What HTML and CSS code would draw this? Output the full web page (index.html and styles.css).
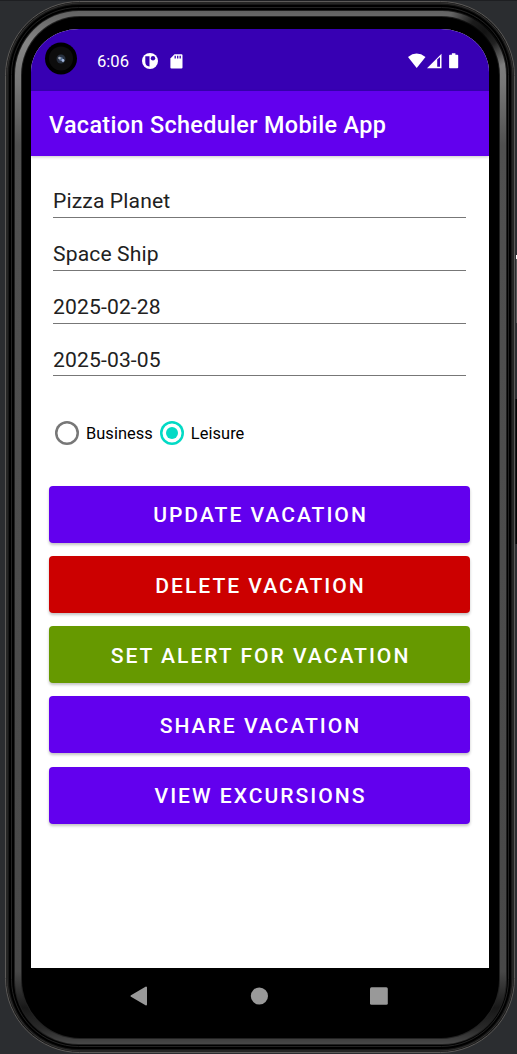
FILE: index.html
```html
<!DOCTYPE html>
<html lang="en">
<head>
<meta charset="utf-8">
<title>Vacation Scheduler Mobile App</title>
<link rel="stylesheet" href="styles.css">
</head>
<body>
<div class="device">
  <svg class="frame" width="517" height="1054" viewBox="0 0 517 1054" aria-hidden="true">
    <defs>
      <linearGradient id="metal" x1="0" y1="0" x2="0" y2="1">
        <stop offset="0" stop-color="#626262"/>
        <stop offset=".03" stop-color="#858585"/>
        <stop offset=".07" stop-color="#777"/>
        <stop offset=".13" stop-color="#505050"/>
        <stop offset=".93" stop-color="#484848"/>
        <stop offset=".965" stop-color="#181818"/>
        <stop offset=".985" stop-color="#292929"/>
        <stop offset="1" stop-color="#484848"/>
      </linearGradient>
      <radialGradient id="shade">
        <stop offset="0" stop-color="#000" stop-opacity=".85"/>
        <stop offset=".4" stop-color="#000" stop-opacity=".75"/>
        <stop offset="1" stop-color="#000" stop-opacity="0"/>
      </radialGradient>
      <clipPath id="ring"><rect x="14" y="10" width="493" height="1035" rx="65"/></clipPath>
    </defs>
    <rect width="517" height="1" fill="#1e1f22"/>
    <rect x="5.5" y="1.5" width="509" height="1051" rx="74" fill="#171717" stroke="#5c5a58"/>
    <rect x="7" y="3" width="506" height="1048" rx="73" fill="none" stroke="#353433"/>
    <rect x="9" y="5" width="502" height="1044" rx="70" fill="#000"/>
    <rect x="11.5" y="7.500" width="497" height="1039" rx="67" fill="none" stroke="#222"/>
    <rect x="14" y="10" width="493" height="1035" rx="65" fill="#202020"/>
    <rect x="15" y="11" width="491" height="1033" rx="64" fill="url(#metal)"/>
    <rect x="21" y="16" width="479" height="1023" rx="59" fill="#222"/>
    <rect x="22" y="17" width="477" height="1021" rx="58" fill="#000"/>
    <circle cx="484" cy="32" r="38" fill="url(#shade)" clip-path="url(#ring)"/>
    <rect x="516" y="255" width="1" height="4" fill="#fff"/>
    <rect x="516" y="259" width="1" height="64" fill="#555"/>
    <rect x="515.500" y="399" width="1.500" height="145" fill="#050505"/>
  </svg>
  <main class="screen">
    <header class="status">
      <svg class="camera" width="34" height="34" viewBox="0 0 34 34" aria-hidden="true">
        <circle cx="17" cy="16.500" r="16" fill="#000"/>
        <circle cx="17" cy="16.500" r="12" fill="#0d0d0d"/>
        <circle cx="17" cy="17" r="4.500" fill="#28313f"/>
        <circle cx="17" cy="17" r="2" fill="#536c91"/>
        <circle cx="15.500" cy="16" r="1.300" fill="#a6adba"/>
        <circle cx="19" cy="18.500" r="1.400" fill="#a4b9df"/>
      </svg>
      <span class="time">6:06</span>
      <svg class="notice" width="16" height="16" viewBox="0 0 16 16" aria-hidden="true">
        <circle cx="8" cy="8" r="8" fill="#fff"/>
        <path d="M3.300 3.300h4.200v10.200q-4.200-.5-4.200-4.500z" fill="#3700b3"/>
        <circle cx="11" cy="5.300" r="2.200" fill="#3700b3"/>
      </svg>
      <svg class="sdcard" width="13" height="15" viewBox="0 0 13 15" aria-hidden="true">
        <path d="M4.500.2H11.500Q12.500.2 12.500 1.400V13.500Q12.500 14.600 11.400 14.600H1.500Q.4 14.600.4 13.500V4.400z" fill="#fff"/>
        <path d="M5.200 1.800v2.700M7.700 1.800v2.700M10.200 1.800v2.700" stroke="#3700b3" stroke-width="1.300"/>
      </svg>
      <svg class="signals" width="53" height="16" viewBox="0 0 53 16" aria-hidden="true">
        <path d="M0 4Q8.500-2.800 17.500 4L8.700 15z" fill="#fff"/>
        <path d="M33.500.7V15.300H19z" fill="#fff"/>
        <path d="M29.200 6.500 32 4v9.800h-2.800z" fill="#3700b3"/>
        <path d="M43.900.2h3.500v1.500h2q.8 0 .8.8v12q0 .8-.8.800h-7.500q-.8 0-.8-.8v-12q0-.8.8-.8h2z" fill="#fff"/>
      </svg>
    </header>
    <div class="appbar"><h1>Vacation Scheduler Mobile App</h1></div>
    <form class="form">
      <div class="fields">
        <div class="field">Pizza Planet</div>
        <div class="field">Space Ship</div>
        <div class="field">2025-02-28</div>
        <div class="field">2025-03-05</div>
      </div>
      <div class="options">
        <div class="option"><span class="radio"></span>Business</div>
        <div class="option"><span class="radio checked"></span>Leisure</div>
      </div>
      <div class="actions">
        <button type="button" class="button">UPDATE VACATION</button>
        <button type="button" class="button delete">DELETE VACATION</button>
        <button type="button" class="button alert">SET ALERT FOR VACATION</button>
        <button type="button" class="button">SHARE VACATION</button>
        <button type="button" class="button">VIEW EXCURSIONS</button>
      </div>
    </form>
  </main>
  <nav class="navbar">
    <svg width="18" height="20" viewBox="0 0 18 20" aria-label="Back"><path d="M16 1.500v17L1.500 10z" fill="#999" stroke="#999" stroke-width="2" stroke-linejoin="round"/></svg>
    <svg width="18" height="20" viewBox="0 0 18 20" aria-label="Home"><circle cx="9.400" cy="10" r="8.600" fill="#999"/></svg>
    <svg width="18" height="20" viewBox="0 0 18 20" aria-label="Recents"><rect y="1.200" width="17.800" height="17.600" rx="1.500" fill="#999"/></svg>
  </nav>
</div>
</body>
</html>
```
FILE: styles.css
```css
* { box-sizing: border-box; }
body { margin: 0; background: #2b2d30; font-family: Roboto, sans-serif; }
.device { position: relative; width: 517px; height: 1054px; padding: 29px 28px 0 31px; overflow: hidden; }
.frame { position: absolute; inset: 0; }
.screen { position: relative; height: 939px; background: #fff; border-radius: 48px 48px 0 0 / 43px 43px 0 0; overflow: hidden; }
.status { display: flex; align-items: flex-start; height: 62px; padding-left: 13px; background: #3700b3; color: #fff; }
.camera { margin-top: 13px; }
.time { margin: 23px 0 0 19px; width: 45px; font-size: 16.6px; line-height: 20px; }
.notice { margin-top: 24px; }
.sdcard { margin: 25px 0 0 12px; }
.signals { margin: 24px 28px 0 auto; }
.appbar { display: flex; align-items: center; height: 65px; padding: 2px 18px 0; background: #6200ee; color: #fff; box-shadow: 0 1px 3px rgba(0,0,0,.22); }
h1 { margin: 0; font-size: 23.4px; font-weight: 500; letter-spacing: .34px; white-space: nowrap; }
.form { padding: 9.3px 19px 0 18px; }
.fields { padding: 0 4px; }
.field { display: flex; align-items: flex-end; height: 52.75px; padding-bottom: 3.7px; border-bottom: 1px solid #777; color: #212121; font-size: 21.1px; line-height: 25px; letter-spacing: .13px; }
.options { display: flex; align-items: center; gap: 7px; height: 24px; margin: 44.7px 0 0 6px; }
.option { display: flex; align-items: center; gap: 7px; font-size: 16.4px; letter-spacing: .06px; color: #000; }
.option { padding-top: 1px; }
.radio { display: grid; place-items: center; width: 24px; height: 24px; margin-top: -1px; border-radius: 50%; box-shadow: inset 0 0 0 2.5px #777; }
.radio.checked { box-shadow: inset 0 0 0 2.5px #03dac5; }
.radio.checked::after { content: ""; width: 12px; height: 12px; border-radius: 50%; background: #03dac5; }
.actions { display: flex; flex-direction: column; gap: 13.2px; margin-top: 40.9px; }
.button { display: flex; align-items: center; justify-content: center; height: 57px; padding: 1px 0 0 2px; border: 0; border-radius: 4px; background: #6200ee; box-shadow: 0 2px 3px rgba(0,0,0,.24); color: #fff; font: 500 21.1px Roboto, sans-serif; letter-spacing: 1.98px; }
.delete { background: #c00; }
.alert { background: #690; }
.navbar { position: relative; display: flex; justify-content: space-between; width: 258px; margin: 18px 0 0 99px; }
.navbar svg { display: block; }
```
